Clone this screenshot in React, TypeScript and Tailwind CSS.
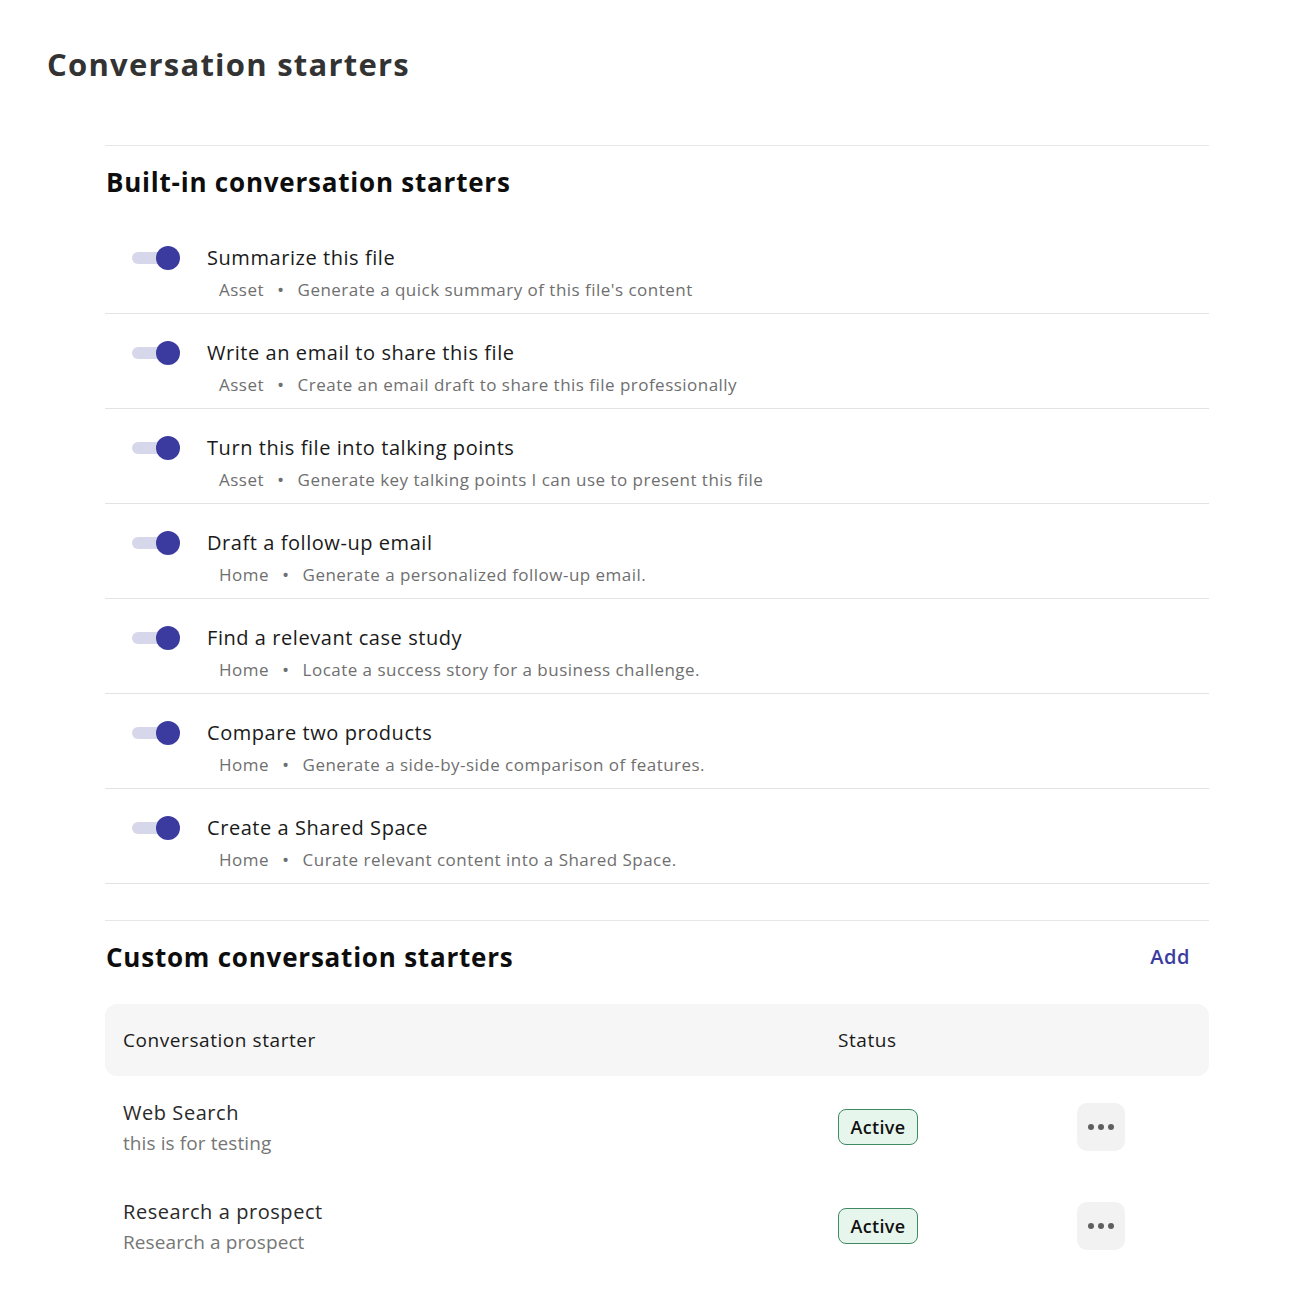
import React, { useState } from "react";

type Starter = {
  id: number;
  title: string;
  scope: string;
  description: string;
};

const builtIn: Starter[] = [
  { id: 1, title: "Summarize this file", scope: "Asset", description: "Generate a quick summary of this file's content" },
  { id: 2, title: "Write an email to share this file", scope: "Asset", description: "Create an email draft to share this file professionally" },
  { id: 3, title: "Turn this file into talking points", scope: "Asset", description: "Generate key talking points I can use to present this file" },
  { id: 4, title: "Draft a follow-up email", scope: "Home", description: "Generate a personalized follow-up email." },
  { id: 5, title: "Find a relevant case study", scope: "Home", description: "Locate a success story for a business challenge." },
  { id: 6, title: "Compare two products", scope: "Home", description: "Generate a side-by-side comparison of features." },
  { id: 7, title: "Create a Shared Space", scope: "Home", description: "Curate relevant content into a Shared Space." },
];

const custom = [
  { id: 1, title: "Web Search", description: "this is for testing", status: "Active" },
  { id: 2, title: "Research a prospect", description: "Research a prospect", status: "Active" },
];

function Toggle({ on, onChange }: { on: boolean; onChange: () => void }) {
  return (
    <button
      onClick={onChange}
      className="relative w-[48px] h-[24px] shrink-0 flex items-center"
      aria-pressed={on}
    >
      <span className={`block h-[12px] w-[38px] rounded-full ${on ? "bg-[#d7d7ec]" : "bg-[#dddddd]"}`} />
      <span
        className={`absolute top-0 w-[24px] h-[24px] rounded-full ${
          on ? "left-[24px] bg-[#3b3b9f]" : "left-0 bg-[#9a9a9a]"
        }`}
      />
    </button>
  );
}

export default function App() {
  const [enabled, setEnabled] = useState<Record<number, boolean>>(
    Object.fromEntries(builtIn.map(s => [s.id, true]))
  );

  return (
    <div className="min-h-screen bg-white font-['Open_Sans',sans-serif] tracking-[0.035em] pt-[42px] pb-[40px]">
      <h1 className="pl-[47px] text-[31px] leading-[44px] font-bold tracking-[0.04em] text-[#333333]">Conversation starters</h1>

      <div className="ml-[105px] w-[1104px] mt-[59px]">
        {/* Built-in */}
        <section className="border-t border-[#e6e6e6] pt-[18px]">
          <h2 className="pl-px text-[26px] leading-[36px] font-bold tracking-[0.03em] text-[#0d0d0d]">Built-in conversation starters</h2>
          <div className="mt-[19px]">
            {builtIn.map(starter => (
              <div key={starter.id} className="flex border-b border-[#e3e3e3] pt-[25px] pb-[11px]">
                <div className="pl-[27px] pt-[2px]">
                  <Toggle
                    on={enabled[starter.id]}
                    onChange={() => setEnabled(prev => ({ ...prev, [starter.id]: !prev[starter.id] }))}
                  />
                </div>
                <div className="ml-[27px]">
                  <p className="text-[20px] leading-[28px] text-[#1a1a1a]">{starter.title}</p>
                  <p className="mt-[6px] pl-[12px] text-[17px] leading-[24px] tracking-[0.028em] text-[#6f6f6f] flex items-center">
                    <span>{starter.scope}</span>
                    <span className="mx-[13px] text-[19px]">•</span>
                    <span>{starter.description}</span>
                  </p>
                </div>
              </div>
            ))}
          </div>
        </section>

        {/* Custom */}
        <section className="border-t border-[#e6e6e6] mt-[36px] pt-[18px]">
          <div className="flex items-center justify-between pr-[19px]">
            <h2 className="pl-px text-[26px] leading-[36px] font-bold tracking-[0.03em] text-[#0d0d0d]">Custom conversation starters</h2>
            <button className="text-[20px] leading-[28px] font-semibold text-[#3b3ba0]">Add</button>
          </div>

          <div className="mt-[29px]">
            <div className="grid grid-cols-[715px_239px_1fr] items-center h-[72px] bg-[#f6f6f6] rounded-[12px] pl-[18px] text-[19px] tracking-[0.03em] text-[#1a1a1a]">
              <span>Conversation starter</span>
              <span>Status</span>
              <span />
            </div>
            {custom.map(row => (
              <div key={row.id} className="grid grid-cols-[715px_239px_1fr] items-center h-[99px] pl-[18px] pt-[3px]">
                <div>
                  <p className="text-[20px] leading-[28px] text-[#2a2a2a]">{row.title}</p>
                  <p className="mt-[3px] text-[19px] leading-[26px] tracking-[0.005em] text-[#767676]">{row.description}</p>
                </div>
                <div>
                  <span className="inline-flex items-center justify-center w-[80px] h-[36px] rounded-[8px] border border-[#3f8a62] bg-[#e7f6ed] text-[18px] font-semibold tracking-[0.02em] text-[#111111]">
                    {row.status}
                  </span>
                </div>
                <div>
                  <button className="w-[48px] h-[48px] rounded-[10px] bg-[#f2f2f2] flex items-center justify-center gap-[4px]">
                    <span className="w-[6px] h-[6px] rounded-full bg-[#5f5f5f]" />
                    <span className="w-[6px] h-[6px] rounded-full bg-[#5f5f5f]" />
                    <span className="w-[6px] h-[6px] rounded-full bg-[#5f5f5f]" />
                  </button>
                </div>
              </div>
            ))}
          </div>
        </section>
      </div>
    </div>
  );
}
